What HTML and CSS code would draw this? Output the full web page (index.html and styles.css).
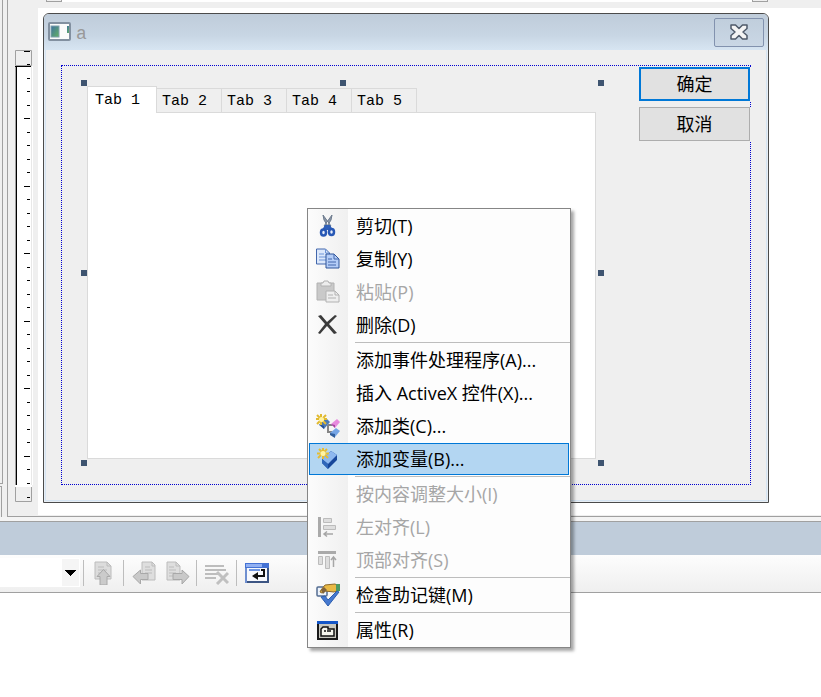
FILE: index.html
```html
<!DOCTYPE html>
<html lang="zh-CN">
<head>
  <meta charset="UTF-8">
  <meta name="viewport" content="width=device-width, initial-scale=1.0">
  <title>a</title>
  <link rel="stylesheet" href="styles.css">
</head>
<body>
  <main class="editor">
    <div class="side-strip">
      <div class="side-top"></div>
      <div class="side-bottom"></div>
    </div>

    <div class="document">
      <div class="ruler-h">
        <span class="ruler-h-end"></span>
        <span class="ruler-h-line"></span>
        <span class="ruler-h-end"></span>
      </div>

      <div class="ruler-v">
        <svg class="ruler-cap" width="18" height="16"><path d="M.5 15.5V.5h16v15z" fill="#efefef" stroke="#a0a0a0"/><path d="M9 1.5h6M12 14.5h3" stroke="#000"/></svg>
        <svg class="ruler-scale" width="18">
          <defs>
            <pattern id="ticks" width="18" height="135" y="-15" patternUnits="userSpaceOnUse">
              <path d="M9 .5h6M12 13.5h3M12 27.5h3M12 40.5h3M12 54.5h3M9 67.5h6M12 81.5h3M12 94.5h3M12 108.5h3M12 121.5h3" stroke="#000"/>
            </pattern>
          </defs>
          <rect width="18" height="100%" fill="#fff"/>
          <rect width="1" height="100%" fill="#a0a0a0"/>
          <rect x="1" width="1" height="100%" fill="#000"/>
          <rect x="16" width="1" height="100%" fill="#e8e8e8"/>
          <rect width="16" height="1" fill="#000"/>
          <rect width="18" height="100%" fill="url(#ticks)"/>
        </svg>
        <svg class="ruler-cap" width="18" height="18"><path d="M0 1h17" stroke="#fff" stroke-width="2"/><path d="M.5 2v14.5h16V2" fill="#efefef" stroke="#a0a0a0"/><path d="M12 12.5h3" stroke="#000"/></svg>
      </div>

      <div class="canvas">
        <section class="dialog">
          <header class="dialog-title">
            <svg width="24" height="20" viewBox="0 0 24 20">
              <defs><linearGradient id="pane" x1="0" y1="0" x2="1" y2="1"><stop offset="0" stop-color="#3f70a0"/><stop offset="1" stop-color="#63b263"/></linearGradient></defs>
              <rect x="1" y="1" width="21" height="17" rx="1" fill="#fbfbfb" stroke="#8290a0" stroke-width="2"/>
              <rect x="3" y="4" width="8" height="11" fill="url(#pane)" stroke="#7e9fae"/>
              <rect x="19" y="4" width="2" height="7" fill="url(#pane)"/>
            </svg>
            <h1>a</h1>
            <button class="close" type="button" aria-label="关闭">
              <svg width="20" height="18" viewBox="0 0 20 18"><path d="M2 2h4.500L10 5.500 13.500 2H18v3.500L14 9l4 3.500V16h-4.500L10 12.500 6.500 16H2v-3.500L6 9 2 5.500z" fill="#f4f4f4" stroke="#4f5a6a" stroke-width="1.500" stroke-linejoin="round"/></svg>
            </button>
          </header>
          <div class="dialog-body">
            <div class="guides">
              <div class="tab-control">
                <div class="tabs" role="tablist">
                  <button type="button" role="tab" aria-selected="true" class="tab active">Tab 1</button>
                  <button type="button" role="tab" class="tab">Tab 2</button>
                  <button type="button" role="tab" class="tab">Tab 3</button>
                  <button type="button" role="tab" class="tab">Tab 4</button>
                  <button type="button" role="tab" class="tab">Tab 5</button>
                </div>
                <div class="tab-panel" role="tabpanel"></div>
                <i class="handle n w"></i>
                <i class="handle n c"></i>
                <i class="handle n e"></i>
                <i class="handle m w"></i>
                <i class="handle m e"></i>
                <i class="handle s w"></i>
                <i class="handle s c"></i>
                <i class="handle s e"></i>
              </div>
              <div class="dialog-buttons">
                <button type="button" class="default">确定</button>
                <button type="button">取消</button>
              </div>
            </div>
          </div>
        </section>
      </div>
    </div>
  </main>

  <section class="output">
    <header class="output-title"></header>
    <div class="toolbar">
      <div class="combo">
        <select aria-label="输出来源"><option></option></select>
        <svg width="17" height="27" viewBox="0 0 17 27"><path d="M3 11h11v1h-1v1h-1v1h-1v1h-1v1H9v1H8v-1H7v-1H6v-1H5v-1H4v-1H3z"/></svg>
      </div>
      <span class="divider"></span>
      <button type="button" class="tool" aria-label="转到消息">
        <svg width="24" height="24" viewBox="0 0 24 24" fill="#dcdcdc" stroke="#bcbcbc"><path d="M3 1h12l4 4v13H3z"/><path d="M15 1v4h4M6 6h6M6 9h9M6 12h5" fill="none"/><path d="M11.500 8.500l6.500 7h-3V24H8v-8.500H5z" fill="#cbcbcb" stroke="#a8a8a8"/></svg>
      </button>
      <span class="divider"></span>
      <button type="button" class="tool" aria-label="上一条消息">
        <svg width="24" height="24" viewBox="0 0 24 24" fill="#dedede" stroke="#bcbcbc"><path d="M10 1h10l3 3v15H10z"/><path d="M20 1v4h3M13 6h5M13 9h7M13 12h7" fill="none"/><path d="M1 15.500L8.500 9v3.500H16v6H8.500V23z" fill="#c9c9c9" stroke="#a8a8a8"/></svg>
      </button>
      <button type="button" class="tool next" aria-label="下一条消息">
        <svg width="24" height="24" viewBox="0 0 24 24" fill="#dedede" stroke="#bcbcbc"><path d="M1 1h9l4 4v14H1z"/><path d="M10 1v4h4M3 6h5M3 9h7M3 12h7M3 15h7" fill="none"/><path d="M23 15.500L16 9v3.500H7v6h9V23z" fill="#c9c9c9" stroke="#a8a8a8"/></svg>
      </button>
      <span class="divider"></span>
      <button type="button" class="tool" aria-label="全部清除">
        <svg width="24" height="24" viewBox="0 0 24 24" fill="none" stroke="#bdbdbd" stroke-width="2"><path d="M0 5h19M0 9h21M0 13h13M0 17h11"/><path d="M12 11l11 11M23 12L12 23" stroke="#c0c0c0" stroke-width="3"/></svg>
      </button>
      <span class="divider"></span>
      <button type="button" class="tool" aria-label="自动换行">
        <svg width="24" height="24" viewBox="0 0 24 24"><path d="M0 2h24v20H0z" fill="#6f8fd0"/><path d="M22 6h2v16H2v-2h20z" fill="#3c5583"/><path d="M0 2h24v5H0z" fill="#4472d4"/><path d="M1 3h16v3H1z" fill="#91b0f2"/><path d="M2 7h20v13H2z" fill="#f7f9fd"/><path d="M4 9h11" stroke="#6f96e0" stroke-width="2"/><path d="M16 9h3v6h-7" fill="none" stroke="#111" stroke-width="2"/><path d="M7 15l6-4v8z" fill="#111"/></svg>
      </button>
    </div>
    <div class="output-text"></div>
  </section>

  <div class="menu" role="menu">
    <button type="button" role="menuitem">
      <svg viewBox="0 0 24 24"><path d="M7 1l1 5 5 8 2-2zM16 1l-1 5-5 8-2-2z" fill="#8b97a8" stroke="#6d7b8e"/><path d="M9 11h5l3 5H6z" fill="#2f5fb8"/><g fill="#e8eefb" stroke="#2858b5" stroke-width="2.500"><ellipse cx="7.500" cy="18.500" rx="2.500" ry="3"/><ellipse cx="15.500" cy="18" rx="2.500" ry="3"/></g></svg>
      <span>剪切(T)</span>
    </button>
    <button type="button" role="menuitem">
      <svg viewBox="0 0 24 24" stroke="#4267ac"><path d="M.5 2h9l4 4v11H.5z" fill="#dce8fb"/><path d="M9.500 2v4h4M3 7h5M3 10h7M3 13h7" fill="none" stroke="#6c94d8"/><path d="M10 7h8l5 5v9H10z" fill="#b4cdf7" stroke="#2f5499"/><path d="M18 7v5h5M12 12h4M12 15h8M12 18h8" fill="none"/></svg>
      <span>复制(Y)</span>
    </button>
    <button type="button" role="menuitem" disabled>
      <svg viewBox="0 0 24 24" stroke="#b2b2b2"><path d="M1 3h17v17H1z" fill="#c9c9c9"/><path d="M5 5V3h2l1-2h4l1 2h2v3H5z" fill="#ededed"/><path d="M10 11h9l4 4v7H10z" fill="#eee"/><path d="M19 11v4h4M12 15h5M12 18h8" fill="none"/></svg>
      <span>粘贴(P)</span>
    </button>
    <button type="button" role="menuitem">
      <svg viewBox="0 0 24 24"><path d="M2 3l3-1 6 7 8-7 2 1-8 8 8 9-3 1-7-8-7 8-2-1 7-9z" fill="#3b3b3b"/></svg>
      <span>删除(D)</span>
    </button>
    <hr>
    <button type="button" role="menuitem"><span>添加事件处理程序(A)...</span></button>
    <button type="button" role="menuitem"><span>插入 ActiveX 控件(X)...</span></button>
    <button type="button" role="menuitem">
      <svg viewBox="0 0 24 24"><path d="M12 11v7h4M12 11h5" fill="none" stroke="#858585" stroke-width="2"/><path d="M3 11l7-7 4 4-6 7z" fill="#4b79b6"/><path d="M3 10l5 2v3z" fill="#234f93"/><path d="M15 10l6-5 3 3-5 6z" fill="#e78add"/><path d="M15 10l4 1v3z" fill="#a445a0"/><path d="M14 19l6-5 4 3-5 6z" fill="#76a5e5"/><path d="M14 19l5 1v4l-5-3z" fill="#315f9d"/><path d="M5 0v11M0 5h11M1 1l9 9M10 1l-9 9" stroke="#e1ba31" stroke-width="2"/><circle cx="5.500" cy="5.500" r="2.500" fill="#fff3a2"/></svg>
      <span>添加类(C)...</span>
    </button>
    <button type="button" role="menuitem" class="selected">
      <svg viewBox="0 0 24 24"><path d="M6 12l9-8 6 4v5l-9 9-6-6z" fill="#17479a"/><path d="M6 12l9-8 6 4-9 9z" fill="#8db8ef"/><path d="M6 12l6 5v5l-6-6z" fill="#2f67b9"/><path d="M7 1v11M1 6.500h12M3 2l9 9M11 2l-9 9" stroke="#e5bd35" stroke-width="2"/><circle cx="7" cy="6.500" r="2.500" fill="#fff4a4"/></svg>
      <span>添加变量(B)...</span>
    </button>
    <hr>
    <button type="button" role="menuitem" disabled><span>按内容调整大小(I)</span></button>
    <button type="button" role="menuitem" disabled>
      <svg viewBox="0 0 24 24"><path d="M2 2h3v20H2z" fill="#aaa"/><path d="M7.500 3.500h8v4h-8zM7.500 10.500h12v4h-12z" fill="#dedede" stroke="#bcbcbc"/><path d="M8 19h9M11 16.500L8 19l3 2.500" fill="none" stroke="#a6a6a6" stroke-width="1.500"/></svg>
      <span>左对齐(L)</span>
    </button>
    <button type="button" role="menuitem" disabled>
      <svg viewBox="0 0 24 24"><path d="M2 3h18v3H2z" fill="#aaa"/><path d="M2.500 8.500h4v8h-4zM9.500 8.500h4v12h-4z" fill="#dedede" stroke="#bcbcbc"/><path d="M17.500 19V9M15 12l2.500-3 2.500 3" fill="none" stroke="#a6a6a6" stroke-width="1.500"/></svg>
      <span>顶部对齐(S)</span>
    </button>
    <hr>
    <button type="button" role="menuitem">
      <svg viewBox="0 0 24 24"><rect x="1" y="4" width="10" height="9" rx="1" fill="#edf3fb" stroke="#536c91" stroke-width="1.500"/><path d="M5 7l4-5 10-1 4 2v4l-5 2-9-1-3 2-2-1z" fill="#e9b944" stroke="#8d6928"/><path d="M20 1h4v7h-4z" fill="#4e9961"/><path d="M5 7l3-3 3 3-4 4z" fill="#80643b"/><path d="M5 14l4-1 3 4 9-9 2 1-11 14z" fill="#4679cf" stroke="#2d5eae"/></svg>
      <span>检查助记键(M)</span>
    </button>
    <hr>
    <button type="button" role="menuitem">
      <svg viewBox="0 0 24 24"><rect x="2" y="4" width="19" height="17" fill="#c8c8c0" stroke="#1a1a1a" stroke-width="2"/><path d="M1 3h21v3H1z" fill="#1557c8"/><path d="M5 18V11l2-2h5v2h6v7z" fill="#f6f6ee" stroke="#111" stroke-width="1.500"/><path d="M8 13h2M11 13h4" stroke="#111" stroke-width="1.500"/></svg>
      <span>属性(R)</span>
    </button>
  </div>
</body>
</html>
```
FILE: styles.css
```css
* {
  box-sizing: border-box;
}

body {
  margin: 0;
  min-height: 100vh;
  display: flex;
  flex-direction: column;
  position: relative;
  background: #f4f4f4;
  color: #000;
  font-family: "Open Sans", "Noto Sans CJK SC", sans-serif;
  font-size: 18px;
}

button {
  font: inherit;
  color: inherit;
  margin: 0;
  padding: 0;
}

svg {
  display: block;
  flex: none;
}

/* editor */
.editor {
  display: flex;
  background: #efefef;
}

.side-strip {
  width: 7px;
  display: flex;
  flex-direction: column;
  gap: 2px;
}

.side-top {
  flex: 1;
  width: 3px;
  border-right: 1px solid #a0a0a0;
  border-bottom: 1px solid #a0a0a0;
}

.side-bottom {
  height: 31px;
  width: 2px;
  border-right: 1px solid #a0a0a0;
  border-top: 1px solid #a0a0a0;
}

.document {
  flex: 1;
  min-width: 0;
  display: grid;
  grid-template-columns: 30px 1fr;
  grid-template-rows: 8px auto;
  border-left: 1px solid #a0a0a0;
  border-bottom: 1px solid #a0a0a0;
}

.ruler-h {
  grid-column: 2;
  display: flex;
  height: 2px;
  padding: 0 53px 0 8px;
}

.ruler-h-end {
  width: 16px;
  border: 1px solid #a0a0a0;
  border-top: 0;
}

.ruler-h-line {
  flex: 1;
  background: #fff;
}

.ruler-v {
  grid-column: 1;
  display: flex;
  flex-direction: column;
  padding: 42px 0 13px 7px;
}

.ruler-scale {
  flex: 1;
}

.canvas {
  background: #fff;
  padding: 5px 52px 12px 5px;
  border-bottom: 1px solid #efefef;
}

/* dialog being designed */
.dialog {
  border: 1px solid #4b4b4b;
  border-radius: 6px 6px 0 0;
  background: #e8eef4;
  overflow: hidden;
}

.dialog-title {
  height: 36px;
  display: flex;
  align-items: center;
  gap: 4px;
  padding: 0 4px;
  background: linear-gradient(#bfccda, #c8d6e4 60%, #d7e5f2);
}

.dialog-title h1 {
  flex: 1;
  margin: 0;
  padding-top: 4px;
  font: 18px "Liberation Mono", monospace;
  color: #999;
}

.close {
  width: 50px;
  height: 29px;
  display: flex;
  align-items: center;
  justify-content: center;
  border: 1px solid #8292ae;
  border-radius: 2px;
  background: linear-gradient(#c0cedc, #cad7e5);
}

.dialog-body {
  margin: 0 1px 1px;
  padding: 15px;
  border: 1px solid #d5e4f2;
  border-top: 0;
  background: #efefef;
}

.guides {
  display: flex;
  gap: 41px;
  padding: 0 0 24px 25px;
  border: 1px dotted #0000d0;
}

.tab-control {
  position: relative;
  flex: 1;
  margin-top: 20px;
  padding: 0 2px 1px 0;
}

.tabs {
  display: flex;
  align-items: flex-end;
  height: 26px;
}

.tab {
  width: 65px;
  height: 24px;
  padding: 2px 0 0 5px;
  border: 1px solid #dadada;
  border-left: 0;
  border-bottom: 0;
  background: #efefef;
  font: 15px "Liberation Mono", monospace;
  text-align: left;
}

.tab.active {
  width: 70px;
  height: 27px;
  margin-bottom: -1px;
  padding: 0 0 0 7px;
  border-left: 1px solid #dadada;
  background: #fff;
  position: relative;
}

.tab-panel {
  min-height: 347px;
  border: 1px solid #dadada;
  background: #fff;
}

.handle {
  position: absolute;
  width: 6px;
  height: 6px;
  background: #3e5470;
}

.n { top: -6px; }
.m { top: calc(50% - 3px); }
.s { bottom: -6px; }
.w { left: -6px; }
.c { left: calc(50% - 3px); }
.e { right: -6px; }

.dialog-buttons {
  width: 111px;
  display: flex;
  flex-direction: column;
  gap: 6px;
  padding-top: 1px;
}

.dialog-buttons button {
  height: 34px;
  padding-bottom: 2px;
  border: 1px solid #adadad;
  background: #e1e1e1;
  box-shadow: 1px 0 0 #efefef;
  font-family: "Noto Sans CJK SC", sans-serif;
}

.dialog-buttons .default {
  border: 2px solid #0078d7;
}

/* output window */
.output {
  flex: 1;
  display: flex;
  flex-direction: column;
  margin-top: 4px;
}

.output-title {
  height: 34px;
  border-top: 1px solid #a0a0a0;
  background: #bfccda;
}

.toolbar {
  height: 38px;
  display: flex;
  align-items: center;
  padding-bottom: 2px;
  border-bottom: 1px solid #a0a0a0;
  background: linear-gradient(#fdfdfd, #efefef);
}

.combo {
  position: relative;
  width: 80px;
  height: 29px;
  margin-right: 3px;
  background: #fff;
}

.combo select {
  width: 100%;
  height: 100%;
  border: 0;
  background: none;
  appearance: none;
}

.combo svg {
  position: absolute;
  top: 1px;
  right: 1px;
  background: #f5f5f5;
  pointer-events: none;
}

.divider {
  width: 1px;
  height: 26px;
  background: #bdbdbd;
}

.tool {
  padding: 0 7px 0 8px;
  border: 0;
  background: none;
}

.tool.next {
  padding: 0 6px 0 3px;
}

.output-text {
  flex: 1;
  background: #fff;
}

/* context menu */
.menu {
  position: absolute;
  left: 307px;
  top: 208px;
  width: 264px;
  padding-top: 1px;
  border: 1px solid #868686;
  background: linear-gradient(to right, #fcfcfc, #f0f0f0 40px, #fdfdfd 40px);
  box-shadow: 3px 3px 3px rgba(0, 0, 0, 0.35);
}

.menu button {
  width: 100%;
  height: 33px;
  display: grid;
  grid-template-columns: 40px 1fr;
  align-items: center;
  padding: 0 0 2px 7px;
  border: 1px solid transparent;
  background: none;
  text-align: left;
  line-height: 24px;
  white-space: nowrap;
}

.menu button span {
  grid-column: 2;
}

.menu button svg {
  width: 24px;
  height: 24px;
}

.menu button:disabled {
  color: #a6a6a6;
}

.menu button.selected {
  width: auto;
  min-width: calc(100% - 2px);
  height: 32px;
  margin: 0 1px 1px;
  padding: 0 0 0 6px;
  border-color: #0078d7;
  background: #b3d6f2;
}

.menu hr {
  height: 2px;
  margin: 0 0 0 47px;
  border: 0;
  border-top: 1px solid #bdbdbd;
}
```
